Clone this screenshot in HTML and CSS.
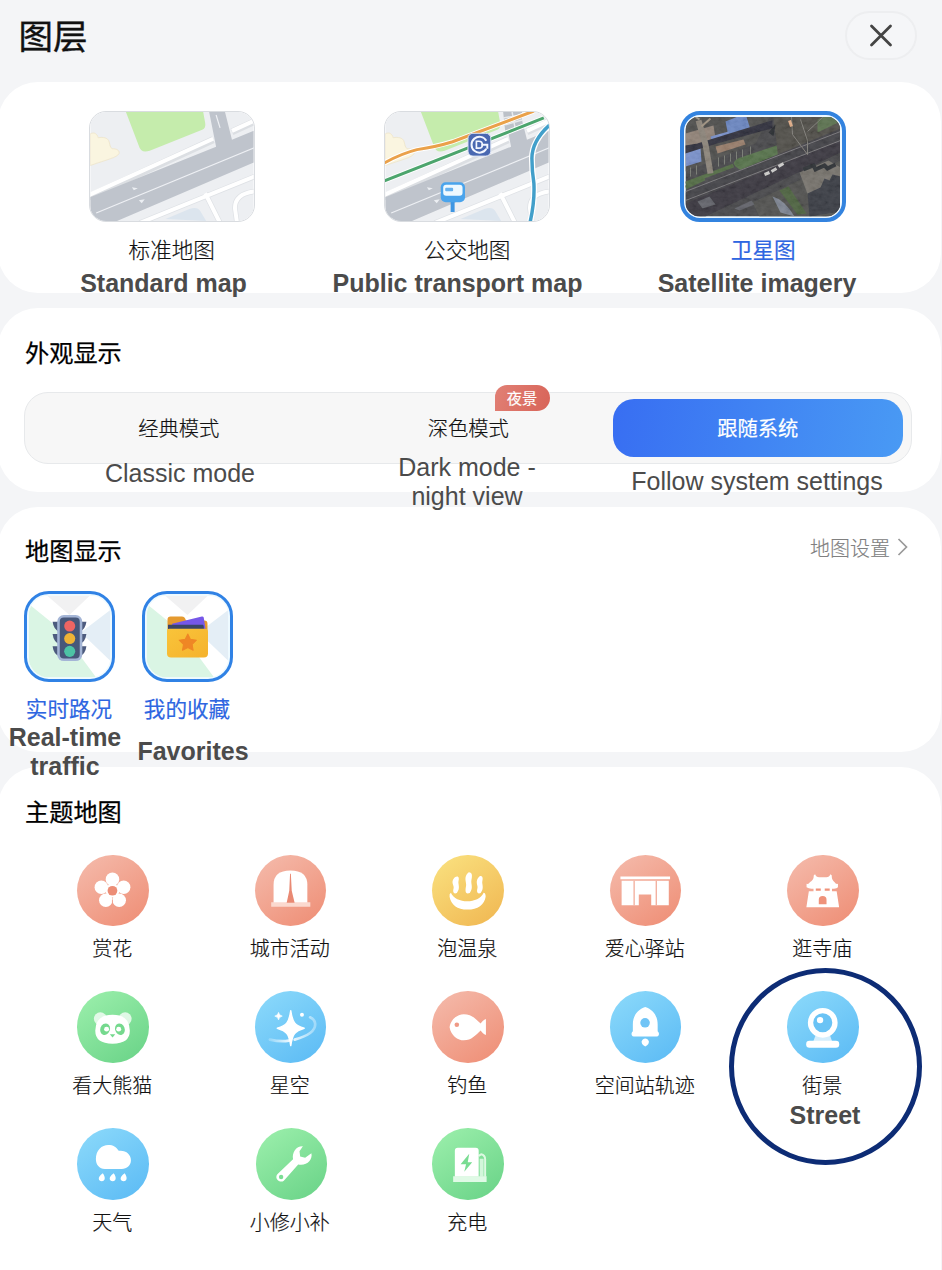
FILE: index.html
```html
<!DOCTYPE html>
<html lang="zh-CN">
<head>
<meta charset="utf-8">
<title>图层</title>
<link rel="stylesheet" href="styles.css">
</head>
<body>
<svg class="defs" width="0" height="0" aria-hidden="true">
  <defs>
    <symbol id="streets" viewBox="0 0 165 110">
      <rect width="165" height="110" fill="#edeff2"/>
      <path d="M0 22c4-2 7 0 8 4 5-1 10 0 11 4 1 3 1 6 3 7 5 0 8 2 7 5-2 4-12 6-29 12z" fill="#faf5e0" stroke="#efe4c8" stroke-width=".8"/>
      <path d="M36 0l13 34q2 8 11 5l53-21q4-2 3-7l-2-11z" fill="#c5ecac"/>
      <path d="M-2 86L124 28M143 20l24-11" stroke="#dcdfe3" stroke-width="7" fill="none"/>
      <path d="M-2 84L124 27M143 19l24-11" stroke="#fff" stroke-width="4" fill="none"/>
      <path d="M0 86l127-51-7-35h16l7 28 22-9v32L27 110H0z" fill="#bfc4cc"/>
      <path d="M6 102L166 36M127 3l4 13" stroke="#eef0f4" stroke-width="1.2"/>
      <path d="M42 76l6 1-4 2zM49 89l6-1-3 4z" fill="#eceff3"/>
      <path d="M76 108l24-10q8-3 11 2l6 10z" fill="#dce5ee"/>
      <path d="M50 112L166 65M116 82l15 30M167 80q-21 2-21 17l2 14" stroke="#dfe2e6" stroke-width="5.5" fill="none"/>
      <path d="M50 112L166 65M116 82l15 30M167 80q-21 2-21 17l2 14" stroke="#fff" stroke-width="4" fill="none"/>
    </symbol>
    <symbol id="tilemap" viewBox="0 0 80 80">
      <rect width="80" height="80" fill="#fff"/>
      <path d="M18 0h42L40 19z" fill="#f1f1f2"/>
      <path d="M0 8l32 26 34 46H0z" fill="#daf5e4"/>
      <path d="M80 14v50L51 36z" fill="#e4eef6"/>
    </symbol>
    <filter id="grain" x="0" y="0" width="100%" height="100%">
      <feTurbulence type="fractalNoise" baseFrequency=".16 .22" numOctaves="4" seed="7"/>
      <feColorMatrix values=".9 0 0 0 -.1  .9 0 0 0 -.1  .9 0 0 0 -.1  0 0 0 0 .13"/>
    </filter>
    <filter id="soft"><feGaussianBlur stdDeviation=".55"/></filter>
    <linearGradient id="folder" x2="1" y2="1"><stop stop-color="#f9c43a"/><stop offset="1" stop-color="#f5b22d"/></linearGradient>
    <linearGradient id="trail"><stop stop-color="#fff" stop-opacity=".25"/><stop offset=".45" stop-color="#fff" stop-opacity=".9"/><stop offset="1" stop-color="#fff" stop-opacity=".35"/></linearGradient>
  </defs>
</svg>

<header class="header">
  <h1 class="title">图层</h1>
  <button class="close" aria-label="关闭"><svg width="24" height="24" viewBox="0 0 24 24"><path d="M2.500 2l19 19M21.500 2l-19 19" stroke="#444" stroke-width="2.800" stroke-linecap="round"/></svg></button>
</header>

<main class="cards">
  <section class="card map-types">
    <div class="map-type">
      <svg class="thumb" viewBox="0 0 165 110"><use href="#streets"/></svg>
      <span class="map-name">标准地图</span>
    </div>
    <div class="map-type">
      <svg class="thumb" viewBox="0 0 165 110">
        <use href="#streets"/>
        <path d="M119 0h19v15l-17 4z" fill="#bcc1c8"/>
        <path d="M128 0l3 16M119 6l19-3M121 13l17-5" stroke="#e8eaed" stroke-width="1.500"/>
        <g fill="none">
          <path d="M-2 52Q16 42 32 38q20-3 36-8L150-1" stroke="#fff" stroke-width="5"/>
          <path d="M-2 52Q16 42 32 38q20-3 36-8L150-1" stroke="#eaa14a" stroke-width="3"/>
          <path d="M-2 70L160 6" stroke="#fff" stroke-width="5"/>
          <path d="M-2 70L160 6" stroke="#4ca56d" stroke-width="3"/>
          <path d="M166 13q-18 16-18 34 0 12 2 25 1 18-4 40" stroke="#fff" stroke-width="6"/>
          <path d="M166 13q-18 16-18 34 0 12 2 25 1 18-4 40" stroke="#429fca" stroke-width="3.500"/>
        </g>
        <rect x="83.500" y="21.500" width="23" height="23" rx="5" fill="#4968b1" stroke="#dce4f4"/>
        <path d="M102 29a8 8 0 1 0 0 8M97 33h6v4" fill="none" stroke="#f2f6ff" stroke-width="2"/>
        <path d="M92 29.500h2.500q3.500 0 3.500 3.500t-3.500 3.500H92z" fill="none" stroke="#f2f6ff" stroke-width="1.700"/>
        <path d="M68 88v13" stroke="#3f96e2" stroke-width="4"/>
        <rect x="56" y="71" width="24.500" height="20" rx="5" fill="#4aa4ec"/>
        <rect x="58.500" y="73.500" width="19.500" height="11" rx="3" fill="#eef9ff"/>
        <rect x="60.500" y="76.500" width="8" height="3.500" rx="1" fill="#67b2ee"/>
      </svg>
      <span class="map-name">公交地图</span>
    </div>
    <div class="map-type selected">
      <svg class="thumb satellite" viewBox="0 0 155 100">
        <rect width="155" height="100" fill="#434346"/>
        <g filter="url(#soft)">
          <path d="M0 0h84L70 27 0 55z" fill="#4c4b4a"/>
          <path d="M0 17l28-8 2 13L0 34z" fill="#918276"/>
          <path d="M40 5L60-3l5 16-22 7z" fill="#6986c4"/>
          <path d="M0 36l15-5 1 14-16 5zM25 20l18-5 2 7-18 5z" fill="#7891ce"/>
          <path d="M0 30l12-2 74-23v6L28 27 0 36z" fill="#292b38" stroke="#2b2c37" stroke-width="2"/>
          <path d="M30 30l28-7 2 5-28 9z" fill="#987c68"/>
          <path d="M50 50q-5-5 5-9l36-12 3 9-37 17z" fill="#537146"/>
          <path d="M0 67l48-18M0 71l19-9" stroke="#506a40" stroke-width="4"/>
          <path d="M5 60v-9m6 7v-9m22 1v-9m6 7v-9m6 6v-8m6 6v-8m6 6v-8m8 5v-8" stroke="#777a72" stroke-width="1"/>
          <path d="M88 0h67v18L93 44z" fill="#4d4b45"/>
          <path d="M132 3l17-7 6 9-23 11z" fill="#59704c"/>
          <path d="M0 76L155 12v24L11 100H0z" fill="#3e3c42"/>
          <path d="M0 87L155 24v12L20 100H0z" fill="#34323a"/>
          <path d="M67 86l88-42v56H74z" fill="#4d4e4b"/>
          <path d="M114 56l29-12 12 7v24l-29 13z" fill="#74716b"/>
          <path d="M122 77l13-6 4-9 5 2 3-6 8 2v35l-31 5z" fill="#343740"/>
          <path d="M94 74l9-4 18 27-9 1z" fill="#49613a"/>
          <path d="M87 80q12 3 22 20l-14-4z" fill="#7d8492"/>
          <path d="M12 85l12-5 6 8-13 4zM49 92l17-8 3 4-15 6z" fill="#5e6067"/>
          <path d="M13 4l7 24 5 29" stroke="#8c8479" stroke-width="6" fill="none"/>
          <path d="M14 3l-6-4M16 10l9-8" stroke="#a0927f" stroke-width="2"/>
          <path d="M83 16l7-8-2 12z" fill="#23252b"/>
          <path d="M0 75L155 15M0 84L155 24" stroke="#78777a" stroke-width="1" fill="none"/>
          <path d="M106 0l1 18 15 20V24L115 3m7 12l15-14" stroke="#807e78" stroke-width="1" fill="none"/>
          <path d="M79 58l5-2M86 55l5-3M93 50l5-3" stroke="#d3d2d0" stroke-width="3"/>
          <path d="M104 4l2 6" stroke="#e5ae86" stroke-width="3"/>
          <path d="M118 53l10-4 2 4 9-4 3 3 8-4" stroke="#272a2e" stroke-width="4" fill="none"/>
        </g>
        <rect width="155" height="100" filter="url(#grain)"/>
      </svg>
      <span class="map-name">卫星图</span>
    </div>
  </section>

  <section class="card appearance">
    <h2 class="section-title">外观显示</h2>
    <div class="segments">
      <span class="segment"><span>经典模式</span></span>
      <span class="segment"><span>深色模式</span><b class="tag">夜景</b></span>
      <span class="segment active"><span>跟随系统</span></span>
    </div>
  </section>

  <section class="card display">
    <div class="section-head">
      <h2 class="section-title">地图显示</h2>
      <a class="settings">地图设置<svg width="12" height="20" viewBox="0 0 12 20"><path d="M1.500 2l8 8-8 8" fill="none" stroke="#999" stroke-width="1.700"/></svg></a>
    </div>
    <div class="features">
      <div class="feature">
        <svg class="tile" viewBox="0 0 80 80"><use href="#tilemap"/>
          <g transform="translate(-5.500 -5.500)">
            <path d="M29 31h7v10q-6-2-7-10M29 43h7v10q-6-2-7-10M29 55h7v10q-6-2-7-10M62 31h-7v10q6-2 7-10M62 43h-7v10q6-2 7-10M62 55h-7v10q6-2 7-10" fill="#4d5b7e"/>
            <rect x="33.500" y="24.500" width="24.500" height="45" rx="6.500" fill="#a4b5d6"/>
            <rect x="36" y="27" width="19.500" height="40" rx="4" fill="#475779"/>
            <circle cx="45.700" cy="35.300" r="5.400" fill="#ef6563"/><circle cx="45.700" cy="47.500" r="5.400" fill="#efb336"/><circle cx="45.700" cy="60" r="5.400" fill="#4dc3a5"/>
          </g>
        </svg>
        <span class="feature-name">实时路况</span>
      </div>
      <div class="feature">
        <svg class="tile" viewBox="0 0 80 80"><use href="#tilemap"/>
          <g transform="translate(-5 -5.500)">
            <path d="M25.500 41V29q0-3 3-3h11q3 0 4 4h18q3 0 3 3v10z" fill="#e59a2f"/>
            <path d="M30 33l29-7q2-.5 2 2l2 13H30z" fill="#7657e8"/>
            <path d="M26 34h34q1 0 1 5v3H26z" fill="#3a4568"/>
            <path d="M25 40q0-2 2-2h35q3 0 3 3v21q0 4-4 4H29q-4 0-4-4z" fill="url(#folder)"/>
            <path d="M45.300 43l2.600 5.300 5.800.8-4.200 4.100 1 5.800-5.200-2.700-5.200 2.700 1-5.800-4.200-4.100 5.800-.8z" fill="#ef8725" stroke="#ef8725" stroke-width="1" stroke-linejoin="round"/>
          </g>
        </svg>
        <span class="feature-name">我的收藏</span>
      </div>
    </div>
  </section>

  <section class="card themes">
    <h2 class="section-title">主题地图</h2>
    <div class="theme-grid">
      <div class="theme"><svg class="disc coral" viewBox="0 0 72 72">
        <circle cx="35.700" cy="24.500" r="6.800"/><circle cx="24.500" cy="32.500" r="6.800"/><circle cx="47" cy="32.500" r="6.800"/><circle cx="29" cy="45.500" r="6.800"/><circle cx="42.500" cy="45.500" r="6.800"/><circle cx="35.700" cy="35.800" r="7"/>
        <circle cx="35.700" cy="36" r="4.900" fill="#ec8d76"/><path d="M35.700 45v8" stroke="#f0a08b" stroke-width=".9"/></svg><span>赏花</span></div>

      <div class="theme"><svg class="disc coral" viewBox="0 0 72 72">
        <path d="M18.700 49V30q0-14.500 17-14.500t17 14.500v19z"/><path d="M16.300 47.500h39.400V52H16.300z" fill="#fbd9cf"/>
        <path d="M35.300 19h.8l.9 17 2.900 12h-8L34.500 36z" fill="#e98973"/></svg><span>城市活动</span></div>

      <div class="theme"><svg class="disc gold" viewBox="0 0 72 72">
        <path d="M23 22.300c4-2 4.500 1 3.700 4s2.300 7-1.700 12c-4 1.500-4-2-3.200-5s-3.800-6 1.200-11zM37 17.300c4 0 3.500 4 2.700 8s2.300 8-1.700 13c-5 2-4.500-3-3.700-7s-3.300-9 2.700-14zM48 21.300c3-.5 3.500 2 2.700 5s2.300 7-1.700 12c-4 1.500-4-2-3.200-5s-3.300-7 2.200-12z"/>
        <path d="M19 38c5 11.500 28 11.500 33 0q2 0 2 4c-1 8-8 13-18.300 13S19 50 17.700 42q-.5-3 1.300-4z"/></svg><span>泡温泉</span></div>

      <div class="theme"><svg class="disc coral" viewBox="0 0 72 72">
        <path d="M10.500 21.700h50v2.700h-50zM11.700 26h47.500v24.700H41.500v-11H29v11H11.700z"/><path d="M24.300 26v24.700M46.600 26v24.700" stroke="#f2ab99" stroke-width="1.300"/></svg><span>爱心驿站</span></div>

      <div class="theme"><svg class="disc coral" viewBox="0 0 72 72">
        <path d="M28.300 19.500q1 3 4 3h7.400q3 0 4-3l1.300 1q0 5 3 7 1 2 3.300 1.500v3.500q-1 1.500-4 1.500h-2v2.500h4.700L52.500 52.500h-33L22 36.500h4.700V34h-2q-3 0-5-1.500V29q2.300.5 3.300-1.500 4-2 4-7z"/>
        <path d="M32 49.500v-4.500q0-3.800 3.900-3.800t3.900 3.800v4.500zM29 33.700h5v2.300h-5zM38 33.700h5v2.300h-5z" fill="#ef927a"/></svg><span>逛寺庙</span></div>

      <div class="theme"><svg class="disc green" viewBox="0 0 72 72">
        <circle cx="23.500" cy="28" r="6.500" opacity=".75"/><circle cx="48.500" cy="28" r="6.500" opacity=".75"/><path d="M18.400 40q0-16 17.400-16t17.400 16q0 13-17.400 13T18.400 40z"/>
        <ellipse cx="28.300" cy="38.500" rx="4.800" ry="6" transform="rotate(20 28.300 38.500)" fill="#75d98e"/><ellipse cx="43.200" cy="38.500" rx="4.800" ry="6" transform="rotate(-20 43.200 38.500)" fill="#75d98e"/><circle cx="29.800" cy="38.400" r="2.500"/><circle cx="42" cy="38.400" r="2.500"/><path d="M33 43.500h5.500l-2.700 3.200z" fill="#75d98e"/></svg><span>看大熊猫</span></div>

      <div class="theme"><svg class="disc blue" viewBox="0 0 72 72">
        <path d="M15 49q11 2.500 19 1M40 49q22-6 20.500-16.500-.5-4-5-6" fill="none" stroke="url(#trail)" stroke-width="2.700" stroke-linecap="round"/>
        <path d="M36 20c1.800 12 4 14.500 13.500 17.500C40 40.500 37.800 43 36 55c-1.800-12-4-14.500-13.500-17.500C32 34.500 34.200 32 36 20z" stroke="#fff" stroke-width="1.500" stroke-linejoin="round"/><path d="M23.700 21.500q.5 3 3.800 3.800-3.300.8-3.800 3.800-.5-3-3.800-3.800 3.300-.8 3.800-3.800z" stroke="#fff" stroke-width=".6"/><circle cx="47.300" cy="24" r="2"/></svg><span>星空</span></div>

      <div class="theme"><svg class="disc coral" viewBox="0 0 72 72">
        <path d="M17.700 36.500C19 28 26 23.300 32 23.300c8 0 12 5 17 9.500 1.500-2 3-4 5.300-4.500v16c-2.300-.5-3.800-2.500-5.300-4.500-5 4.500-9 9.900-17 9.900-6 0-13-4.700-14.300-13.200z"/><circle cx="25" cy="34" r="2.300" fill="#ef9985"/></svg><span>钓鱼</span></div>

      <div class="theme"><svg class="disc blue" viewBox="0 0 72 72">
        <path d="M35.500 16c8 2.500 12.500 9 12.500 18v6.500q2 2 1 4-.5 1.300-2 1.300H24q-1.500 0-2-1.300-1-2 1-4V34c0-9 4.500-15.500 12.500-18z"/><circle cx="35.300" cy="32" r="4.800" fill="#70c4f6"/><path d="M35.500 56c-3-2-4-3.500-3.500-5.500 1-3.500 6-3.500 7 0 .5 2-.5 3.500-3.500 5.500z"/></svg><span>空间站轨迹</span></div>

      <div class="theme"><svg class="disc blue" viewBox="0 0 72 72">
        <path d="M29 44h14l3 8H26z" opacity=".7"/><circle cx="36" cy="32" r="12.300" fill="#6ac3f5" stroke="#fff" stroke-width="5.400"/><circle cx="33.300" cy="29.300" r="3.200"/><rect x="19.300" y="50.200" width="33.300" height="7" rx="3.300"/></svg><span>街景</span></div>

      <div class="theme"><svg class="disc blue" viewBox="0 0 72 72">
        <path d="M28 41.300c-5.500 0-9-4.300-9-10C19 22 25 17 31.500 17c5 0 8 2 10.500 6 7-1 12.300 3.500 12.300 9.500 0 5.300-4 8.800-9.300 8.800z"/><path d="M26 45.500c3 4 2.500 8-1 8s-5-4 1-8zM37 45.500c3 4 2.500 8-1 8s-5-4 1-8zM48 45.500c3 4 2.500 8-1 8s-5-4 1-8z"/></svg><span>天气</span></div>

      <div class="theme shifted"><svg class="disc green" viewBox="0 0 72 72">
        <path d="M21.500 46.500l15.800-15C36 24.500 40.500 18 47.200 18.300l-3.400 5.200.7 5.300 5 1.200 6.300-4.500c1.500 7-5 13-13.300 11.200L28 53c-3.500 3-10-2-6.500-6.500z"/><circle cx="25.300" cy="49.300" r="2.200" fill="#7bdd94"/></svg><span>小修小补</span></div>

      <div class="theme"><svg class="disc green" viewBox="0 0 72 72">
        <path d="M47 28l2.500-1.500q4 1 4 5V49" fill="none" stroke="#ddf9e2" stroke-width="2"/><path d="M48 31h4v18h-4z" fill="#d2f6da"/><path d="M23 23q0-3 3-3h18q3 0 3 3v26H23z"/><path d="M21.300 48.700H55v5.600H21.300z" fill="#e0fae6"/><path d="M37.500 26L28.800 36.500h5.500L32.500 44l8-9.500H36z" fill="#79dc92"/></svg><span>充电</span></div>
    </div>
  </section>
</main>

<aside class="notes" lang="en">
  <p class="note bold n-standard">Standard map</p>
  <p class="note bold n-transit">Public transport map</p>
  <p class="note bold n-satellite">Satellite imagery</p>
  <p class="note n-classic">Classic mode</p>
  <p class="note n-dark">Dark mode -<br>night view</p>
  <p class="note n-system">Follow system settings</p>
  <p class="note bold n-traffic">Real-time<br>traffic</p>
  <p class="note bold n-favorites">Favorites</p>
  <p class="note bold n-street">Street</p>
  <div class="ring"></div>
</aside>
</body>
</html>
```
FILE: styles.css
```css
* { box-sizing: border-box; }
body {
  margin: 0;
  position: relative;
  width: 942px;
  height: 1270px;
  overflow: hidden;
  background: #f4f5f7;
  color: #111;
  font-family: "Noto Sans CJK SC", sans-serif;
}
h1, h2, p { margin: 0; }
.defs { position: absolute; }

.header {
  display: flex;
  justify-content: space-between;
  align-items: flex-start;
  height: 82px;
  padding: 11px 25px 0 18.5px;
}
.title { font-size: 34.5px; font-weight: 400; line-height: 46px; -webkit-text-stroke: .4px; }
.close {
  display: grid;
  place-items: center;
  width: 72px;
  height: 49px;
  padding: 0;
  border: 2px solid #edeef0;
  border-radius: 25px;
  background: #f5f6f8;
}

.cards {
  display: flex;
  flex-direction: column;
  gap: 15px;
  width: 943px;
  margin-left: -2px;
}
.card { background: #fff; border-radius: 40px; padding-left: 26px; padding-right: 30px; }
.section-title { padding-left: 1px; font-size: 24.2px; font-weight: 400; line-height: 32px; color: #000; -webkit-text-stroke: .25px; }

.map-types {
  display: grid;
  grid-template-columns: repeat(3, 295.5px);
  height: 211px;
  padding: 29px 0 0 26px;
}
.map-type { display: flex; flex-direction: column; align-items: center; gap: 12px; }
.thumb { display: block; width: 166px; height: 111px; border-radius: 17px; border: 1px solid #d9dce0; }
.satellite { padding: 1.5px; border: 4px solid #3383df; border-radius: 20px; background: #eef8ff; }
.map-name { font-size: 21.6px; line-height: 30px; font-weight: 300; -webkit-text-stroke: .2px; }
.selected .map-name { padding-left: 1px; color: #2e66e1; font-weight: 400; }

.appearance { height: 184px; padding-top: 28px; }
.segments {
  display: grid;
  grid-template-columns: repeat(3, 289.5px);
  width: 888px;
  height: 72px;
  margin-top: 24px;
  padding: 6px 0 6px 9px;
  background: #f7f7f7;
  border: 1px solid #e7e9eb;
  border-radius: 24px;
}
.segment {
  position: relative;
  display: grid;
  place-items: center;
  padding-bottom: 3px;
  font-size: 20.3px;
  font-weight: 300;
  -webkit-text-stroke: .2px;
}
.active { color: #fff; font-weight: 400; border-radius: 21px; background: linear-gradient(100deg, #386ef2, #499af4); }
.tag {
  position: absolute;
  left: 171px;
  top: -14px;
  width: 55px;
  height: 26px;
  border-radius: 12px 13px 13px 0;
  background: linear-gradient(110deg, #e18075, #d86458);
  color: #fff;
  font-size: 15.2px;
  font-weight: 400;
  line-height: 25px;
  text-align: center;
}

.display { height: 245px; padding-top: 27px; }
.section-head { display: flex; justify-content: space-between; height: 57px; }
.settings { display: flex; align-items: center; gap: 7px; height: 26px; padding-right: 2px; color: #808080; font-size: 20px; font-weight: 300; -webkit-text-stroke: .15px; }
.features { display: flex; gap: 28px; }
.feature { display: flex; flex-direction: column; align-items: center; gap: 11px; width: 90px; }
.tile { display: block; width: 91px; height: 91px; padding: 1.5px; border: 3.500px solid #3082e5; border-radius: 25px; background: #eefaff; }
.feature-name { color: #2e66e1; font-size: 21.6px; line-height: 30px; white-space: nowrap; -webkit-text-stroke: .15px; }

.themes { height: 530px; padding-top: 28px; border-bottom-left-radius: 0; border-bottom-right-radius: 0; }
.theme-grid { display: grid; grid-template-columns: repeat(5, 177.5px); grid-auto-rows: 136.8px; margin-top: 27.7px; }
.theme { display: flex; flex-direction: column; align-items: center; gap: 7px; font-size: 20px; line-height: 30px; font-weight: 300; -webkit-text-stroke: .2px; }
.theme span { padding-right: 1px; }
.disc { display: block; width: 71.5px; height: 71.5px; border-radius: 50%; fill: #fff; -webkit-text-stroke: 0; }
.shifted .disc { margin-left: 2px; }
.coral { background: linear-gradient(145deg, #f4b7a7 10%, #ef9179 90%); }
.gold { background: linear-gradient(145deg, #f9de7c 10%, #f1ba55 90%); }
.green { background: linear-gradient(145deg, #98eda9 10%, #6dd58a 90%); }
.blue { background: linear-gradient(145deg, #88d7fa 10%, #5fbdf5 90%); }

.note {
  position: absolute;
  color: #4b4b4b;
  font: 25px/29px "Liberation Sans", Arial, sans-serif;
  text-align: center;
  white-space: nowrap;
  transform: translateX(-50%);
}
.bold { font-weight: 700; }
.n-standard { left: 163.5px; top: 269px; }
.n-transit { left: 457.5px; top: 269px; }
.n-satellite { left: 757px; top: 269px; }
.n-classic { left: 180px; top: 459px; }
.n-dark { left: 467px; top: 453px; }
.n-system { left: 757px; top: 467px; }
.n-traffic { left: 65px; top: 723px; }
.n-favorites { left: 193px; top: 737px; }
.n-street { left: 825px; top: 1101px; }
.ring {
  position: absolute;
  left: 729px;
  top: 968px;
  width: 193px;
  height: 197px;
  border: 5px solid #0d2c75;
  border-radius: 50%;
}
```
